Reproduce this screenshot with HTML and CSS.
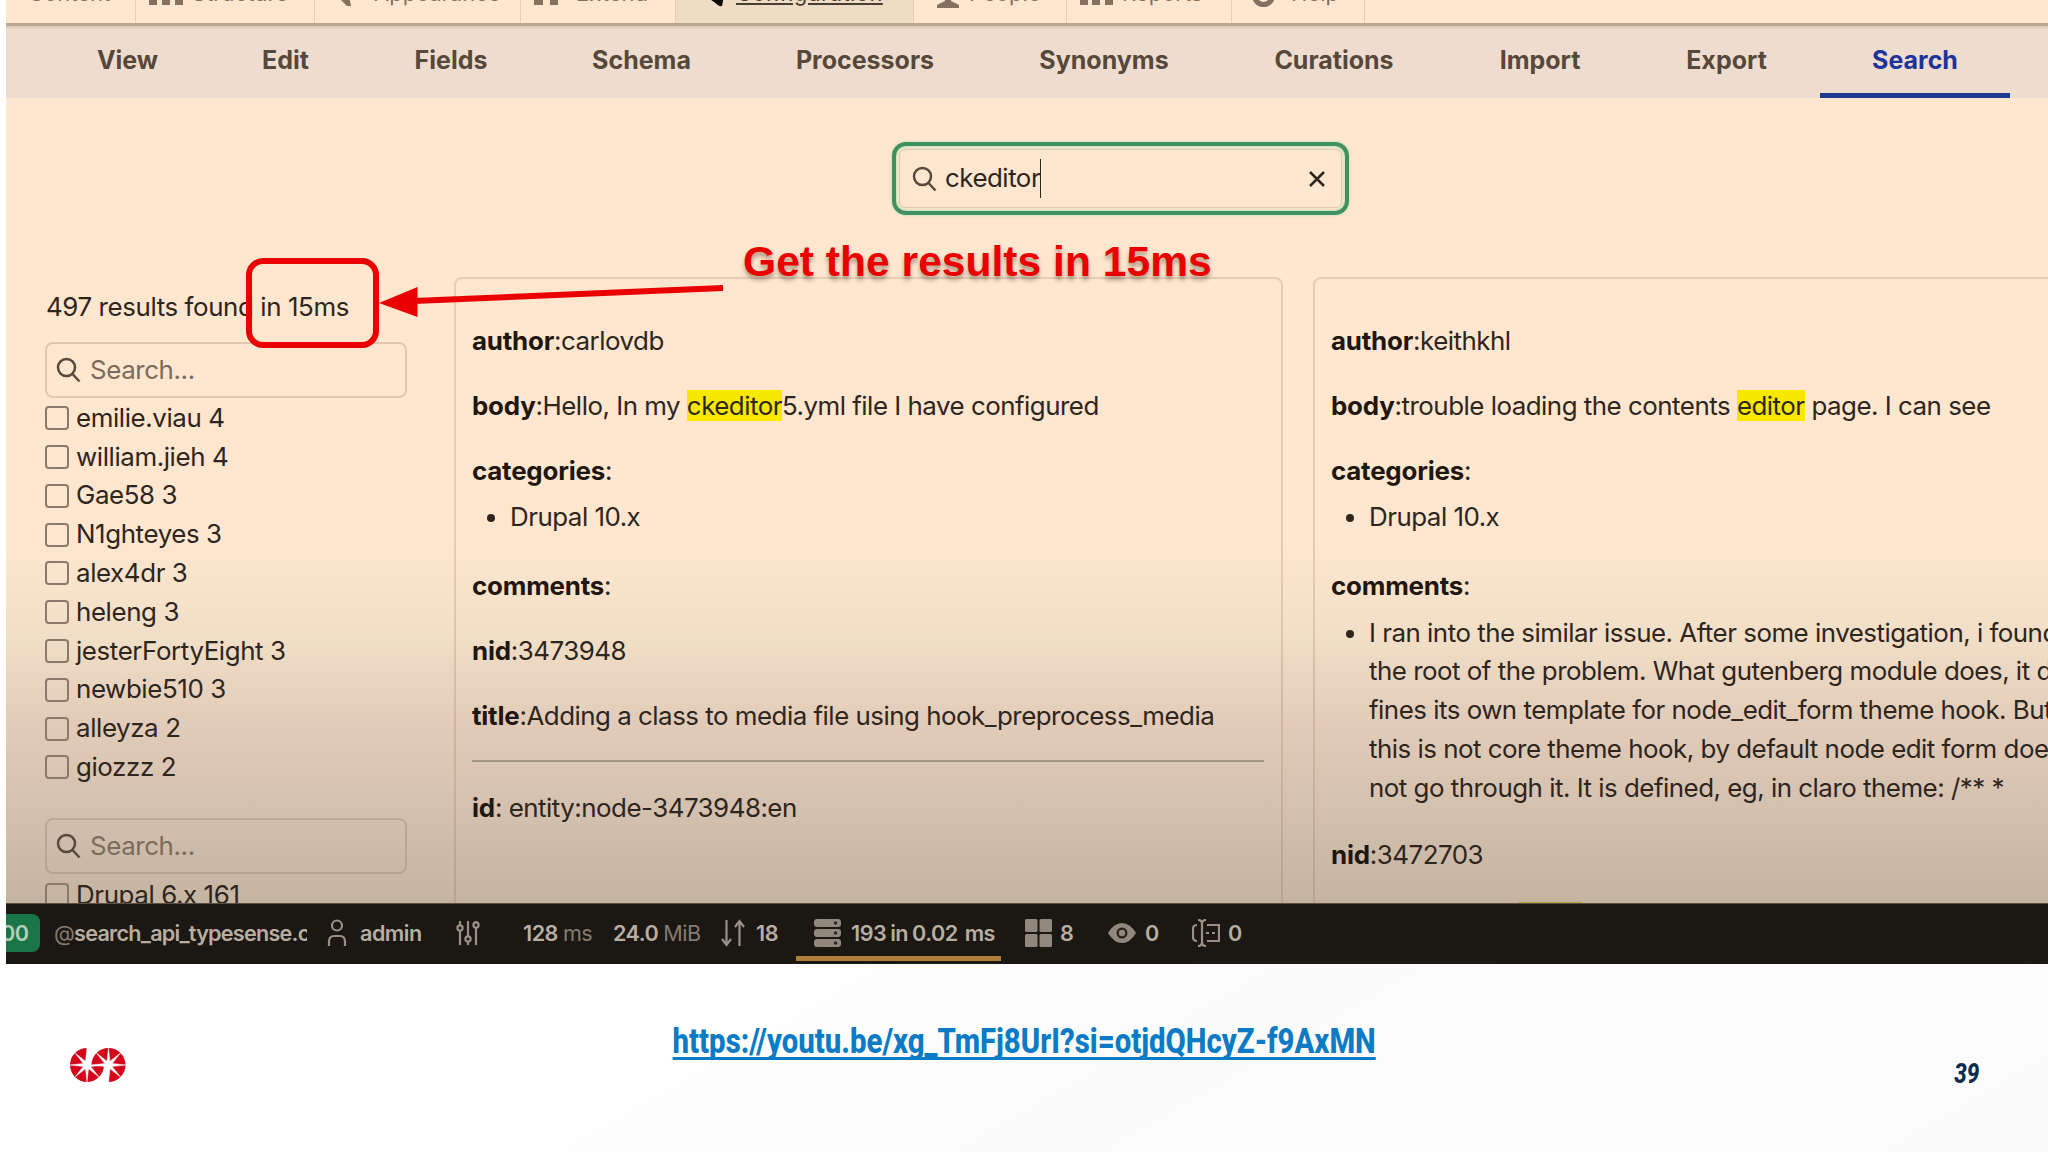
FILE: index.html
```html
<!DOCTYPE html>
<html lang="en">

<head>
    <meta charset="utf-8">
    <title>Search results in 15ms</title>
    <link rel="stylesheet" href="styles.css">
</head>

<body>
    <div class="slide">
        <div class="screen">
            <nav class="admin-bar">
                <a class="admin-item"><span>Content</span></a>
                <a class="admin-item">
                    <svg width="34" height="22" viewBox="0 0 34 22"><path d="M4 12v8M17 12v8M30 12v8M4 10h26M17 2v8" stroke="currentColor" stroke-width="3" /><path d="M0 13h8v8H0zM13 13h8v8h-8zM26 13h8v8h-8z" fill="currentColor" /></svg>
                    <span>Structure</span>
                </a>
                <a class="admin-item">
                    <svg width="34" height="22" viewBox="0 0 34 22"><path d="M4 8l6-6 10 10 2 10h-4z" fill="currentColor" /></svg>
                    <span>Appearance</span>
                </a>
                <a class="admin-item">
                    <svg width="24" height="20" viewBox="0 0 24 20"><path d="M0 2h24v18h-8v-6H9v6H0z" fill="currentColor" /></svg>
                    <span>Extend</span>
                </a>
                <a class="admin-item active">
                    <svg width="24" height="24" viewBox="0 0 24 24"><path d="M4 10L14 2l8 6-3 15c-5 1-5-4-15-8z" fill="currentColor" /></svg>
                    <span>Configuration</span>
                </a>
                <a class="admin-item">
                    <svg width="24" height="25" viewBox="0 0 24 25"><circle cx="12" cy="7" r="6" fill="currentColor" /><path d="M9 10h6v8l8 4v3H1v-3l8-4z" fill="currentColor" /></svg>
                    <span>People</span>
                </a>
                <a class="admin-item">
                    <svg width="33" height="22" viewBox="0 0 33 22"><path d="M0 12h8v9H0zM12 5h8v16h-8zM25 0h8v21h-8z" fill="currentColor" /></svg>
                    <span>Reports</span>
                </a>
                <a class="admin-item">
                    <svg width="23" height="23" viewBox="0 0 23 23"><circle cx="11.5" cy="11.500" r="9" fill="none" stroke="currentColor" stroke-width="5" /></svg>
                    <span>Help</span>
                </a>
            </nav>

            <nav class="tabs">
                <a class="tab">View</a>
                <a class="tab">Edit</a>
                <a class="tab">Fields</a>
                <a class="tab">Schema</a>
                <a class="tab">Processors</a>
                <a class="tab">Synonyms</a>
                <a class="tab">Curations</a>
                <a class="tab">Import</a>
                <a class="tab">Export</a>
                <a class="tab active">Search</a>
            </nav>

            <main class="content">
                <div class="main-search">
                    <div class="main-search-inner">
                        <svg width="25" height="26" viewBox="0 0 25 26"><circle cx="10.500" cy="10.500" r="8.500" /><path d="M16.500 17l7 7.500" /></svg>
                        <span class="query">ckeditor</span>
                        <svg class="clear" width="18" height="18" viewBox="0 0 18 18"><path d="M2 2l14 14M16 2L2 16" /></svg>
                    </div>
                </div>

                <div class="columns">
                    <aside class="sidebar">
                        <div class="stats">497 results found in 15ms</div>
                        <div class="facet-search">
                            <svg width="25" height="26" viewBox="0 0 25 26"><circle cx="10.500" cy="10.500" r="8.500" /><path d="M16.500 17l7 7.500" /></svg>
                            <span>Search...</span>
                        </div>
                        <ul class="facets">
                            <li><i class="box"></i>emilie.viau 4</li>
                            <li><i class="box"></i>william.jieh 4</li>
                            <li><i class="box"></i>Gae58 3</li>
                            <li><i class="box"></i>N1ghteyes 3</li>
                            <li><i class="box"></i>alex4dr 3</li>
                            <li><i class="box"></i>heleng 3</li>
                            <li><i class="box"></i>jesterFortyEight 3</li>
                            <li><i class="box"></i>newbie510 3</li>
                            <li><i class="box"></i>alleyza 2</li>
                            <li><i class="box"></i>giozzz 2</li>
                        </ul>
                        <div class="facet-search">
                            <svg width="25" height="26" viewBox="0 0 25 26"><circle cx="10.500" cy="10.500" r="8.500" /><path d="M16.500 17l7 7.500" /></svg>
                            <span>Search...</span>
                        </div>
                        <ul class="facets">
                            <li><i class="box"></i>Drupal 6.x 161</li>
                        </ul>
                    </aside>

                    <article class="card">
                        <p><b>author</b>:carlovdb</p>
                        <p><b>body</b>:Hello, In my <mark>ckeditor</mark>5.yml file I have configured</p>
                        <p class="list-title"><b>categories</b>:</p>
                        <ul>
                            <li>Drupal 10.x</li>
                        </ul>
                        <p><b>comments</b>:</p>
                        <p><b>nid</b>:3473948</p>
                        <p class="last"><b>title</b>:Adding a class to media file using hook_preprocess_media</p>
                        <hr>
                        <p><b>id</b>: entity:node-3473948:en</p>
                    </article>

                    <article class="card">
                        <p><b>author</b>:keithkhl</p>
                        <p><b>body</b>:trouble loading the contents <mark>editor</mark> page. I can see</p>
                        <p class="list-title"><b>categories</b>:</p>
                        <ul>
                            <li>Drupal 10.x</li>
                        </ul>
                        <p class="list-title"><b>comments</b>:</p>
                        <ul>
                            <li>I ran into the similar issue. After some investigation, i found<br>
                                the root of the problem. What gutenberg module does, it de<br>
                                fines its own template for node_edit_form theme hook. But<br>
                                this is not core theme hook, by default node edit form does<br>
                                not go through it. It is defined, eg, in claro theme: /** *</li>
                        </ul>
                        <p class="last"><b>nid</b>:3472703</p>
                        <div class="next-mark"></div>
                    </article>
                </div>
            </main>

            <footer class="toolbar">
                <div class="status">00</div>
                <div class="tool route"><span class="dim">@</span>search_api_typesense.c</div>
                <div class="tool">
                    <svg width="20" height="28" viewBox="0 0 20 28"><circle cx="10" cy="6.500" r="5" /><path d="M2 27v-4q0-6 5-6h6q5 0 5 6v4" /></svg>
                </div>
                <div class="tool">admin</div>
                <div class="tool">
                    <svg width="24" height="26" viewBox="0 0 24 26"><path d="M4 1v4M4 11v14M12 1v15M12 22v3M20 1v1M20 8v17" /><circle cx="4" cy="8" r="2.600" /><circle cx="12" cy="19" r="2.600" /><circle cx="20" cy="5" r="2.600" /></svg>
                </div>
                <div class="tool">128<span class="dim unit">ms</span></div>
                <div class="tool">24.0<span class="dim unit">MiB</span></div>
                <div class="tool">
                    <svg width="25" height="28" viewBox="0 0 25 28"><path d="M5.500 1v24M1 20l4.500 6L10 20M18.500 27V3M14 8l4.500-6L23 8" /></svg>
                </div>
                <div class="tool">18</div>
                <div class="tool queries">
                    <svg class="solid" width="27" height="28" viewBox="0 0 27 28"><rect width="27" height="8" rx="3" /><rect y="10" width="27" height="8" rx="3" /><rect y="20" width="27" height="8" rx="3" /><g class="hole"><circle cx="21.500" cy="4" r="1.700" /><circle cx="21.500" cy="14" r="1.700" /><circle cx="21.500" cy="24" r="1.700" /></g></svg>
                    <span>193<span class="in">in</span>0.02 <span class="ms">ms</span></span>
                </div>
                <div class="tool">
                    <svg class="solid" width="27" height="28" viewBox="0 0 27 28"><rect width="12.500" height="13" rx="1.500" /><rect x="14.500" width="12.500" height="13" rx="1.500" /><rect y="15" width="12.500" height="13" rx="1.500" /><rect x="14.500" y="15" width="12.500" height="13" rx="1.500" /></svg>
                </div>
                <div class="tool">8</div>
                <div class="tool">
                    <svg class="solid" width="28" height="20" viewBox="0 0 28 20"><path d="M0 10Q6 0 14 0t14 10q-6 10-14 10T0 10z" /><circle class="hole" cx="14" cy="10" r="5.500" /><circle cx="14" cy="10" r="3.200" /></svg>
                </div>
                <div class="tool">0</div>
                <div class="tool">
                    <svg width="28" height="28" viewBox="0 0 28 28"><path d="M5 6Q1 6 1 10v8q0 4 4 4M6 1q4 0 4 4v18q0 4-4 4M14 1q-4 0-4 4M14 27q-4 0-4-4M15 6h12v16H15M14 14h3M20 14h3" /></svg>
                </div>
                <div class="tool">0</div>
            </footer>

            <!-- annotation over the recording -->
            <div class="highlight-box"></div>
            <svg class="arrow" width="350" height="40" viewBox="0 0 350 40">
                <path d="M35 19L344 6" stroke="#ea0000" stroke-width="6" />
                <path d="M0 21L38.500 5v30z" fill="#ea0000" />
            </svg>
            <div class="callout">Get the results in 15ms</div>
        </div>

        <div class="slide-footer">
            <svg class="logo" width="56" height="34" viewBox="0 0 56 34">
                <g id="half">
                    <path d="M17 0A17 17 0 1 0 34 17H17z" fill="#d3061c" />
                    <path d="M17 0l1.500 13.300 2.200 2.200L34 17l-13.300 1.500L29 29l-10.500-8.300L17 34l-1.500-13.300L5 29l8.300-10.500L0 17l13.300-1.500L5 5l10.500 8.300z" fill="#fff" stroke="#fff" stroke-width="0.500" />
                </g>
                <use href="#half" transform="rotate(180 27.750 17)" />
            </svg>
            <a class="video-link"><span>https://youtu.be/xg_TmFj8UrI?si=otjdQHcyZ-f9AxMN</span></a>
            <div class="page-number">39</div>
        </div>
    </div>
</body>

</html>
```
FILE: styles.css
```css
* {
    box-sizing: border-box;
    margin: 0;
    padding: 0;
}

body {
    font-family: Inter, "Liberation Sans", sans-serif;
    background: #fff;
    overflow: hidden;
}

.slide {
    width: 2048px;
    height: 1152px;
    overflow: hidden;
    display: flex;
    flex-direction: column;
    background: linear-gradient(150deg, #fff 0%, #fff 60%, #fafafa 75%, #fdfdfd 82%, #fafafa 100%);
}

.screen {
    position: relative;
    height: 964px;
    margin-left: 6px;
    overflow: hidden;
    display: flex;
    flex-direction: column;
    background: linear-gradient(#fee6cf 0, #fee6cf 540px, #f1dec6 640px, #e2ccb9 720px, #d2bfad 820px, #c4b4a1 903px);
    color: #2e251d;
}

/* admin toolbar, scrolled half out of view */
.admin-bar {
    flex: none;
    height: 23px;
    overflow: hidden;
    display: grid;
    grid-template-columns: 130px 179px 206px 155px 238px 153px 165px 133px;
}

.admin-item {
    height: 60px;
    margin-top: -37px;
    display: flex;
    align-items: center;
    gap: 9px;
    padding-left: 13px;
    border-right: 1px solid #e3cfb8;
    font-size: 22px;
    color: #837060;
}

.admin-item svg {
    position: relative;
    top: 2px;
}

.admin-item:first-child {
    padding-left: 22px;
}

.admin-item.active {
    background: #eedcc4;
    padding-left: 27px;
    color: #0d0906;
}

.admin-item.active span {
    letter-spacing: 0.4px;
    text-decoration: underline;
    color: #4a3d31;
}

.admin-item:nth-child(3) {
    gap: 11px;
    padding-left: 14px;
}

.admin-item:nth-child(4) {
    gap: 18px;
}

.admin-item:nth-child(6) {
    padding-left: 22px;
}

.admin-item:nth-child(8) {
    gap: 16px;
    padding-left: 20px;
}

.tabs {
    flex: none;
    height: 75px;
    padding-left: 40px;
    border-top: 3px solid #bba891;
    background: linear-gradient(#d9c8b6 0, #eeddce 4px);
    display: grid;
    grid-template-columns: 163px 153px 178px 203px 244px 234px 226px 186px 187px 190px;
}

.tab {
    display: flex;
    align-items: center;
    justify-content: center;
    font-size: 25px;
    font-weight: 700;
    color: #57483c;
    border-bottom: 5px solid transparent;
}

.tab.active {
    color: #1c339b;
    border-bottom-color: #1c3c8f;
}

.content {
    flex: 1;
    min-height: 0;
    overflow: hidden;
    padding: 44px 0 0 39px;
    font-size: 25.9px;
    line-height: 38.8px;
    letter-spacing: -0.5px;
}

.main-search {
    width: 457px;
    height: 73px;
    margin-left: 847px;
    padding: 3px;
    border: 4px solid #3f9260;
    border-radius: 14px;
    box-shadow: 0 0 3px #a4dfae, inset 0 0 4px #a4dfae;
}

.main-search-inner {
    height: 100%;
    display: flex;
    align-items: center;
    padding: 0 15px 0 12px;
    border: 1px solid #dcc9b0;
    border-radius: 6px;
}

.main-search svg,
.facet-search svg {
    fill: none;
    stroke: #57493c;
    stroke-width: 2.5;
}

.query {
    margin-left: 8px;
    border-right: 1px solid #2e251d;
}

.main-search .clear {
    margin-left: auto;
    stroke: #2e251d;
}

.columns {
    display: grid;
    grid-template-columns: 361px 829px 829px;
    margin-top: 62px;
}

.sidebar {
    letter-spacing: -0.4px;
    margin-right: -1px;
}

.stats {
    padding-left: 1px;
    margin-top: 11px;
    margin-bottom: 15px;
}

.facet-search {
    height: 56px;
    display: flex;
    align-items: center;
    padding-left: 9px;
    border: 2px solid rgba(120, 90, 60, 0.22);
    border-radius: 8px;
    color: #7b6b5d;
}

.facet-search span {
    padding-top: 2px;
    margin-left: 9px;
}

.facets {
    list-style: none;
    margin-top: 1px;
    margin-bottom: 31px;
}

.facets li {
    height: 38.8px;
    display: flex;
    align-items: center;
    white-space: nowrap;
}

.box {
    width: 24px;
    height: 24px;
    margin-right: 7px;
    border: 2px solid #8b7a6b;
    border-radius: 4px;
}

.facets + .facet-search + .facets {
    margin-top: 2px;
}

.card {
    height: 640px;
    margin-left: 48px;
    margin-right: -48px;
    padding: 43px 17px 0 16px;
    border: 2px solid rgba(120, 90, 60, 0.18);
    border-radius: 8px;
    white-space: nowrap;
}

.card + .card {
    margin-left: 78px;
    margin-right: -78px;
}

.card p {
    margin-bottom: 26px;
}

.card .list-title {
    margin-bottom: 7.6px;
}

.card .last {
    margin-bottom: 0;
}

.card ul {
    padding-left: 38px;
    margin-bottom: 30.5px;
}

.card .list-title + ul + .last {
    margin-top: -2px;
}

.card hr {
    border: none;
    border-top: 2px solid #a39383;
    margin: 24px 0 27px;
}

.card b {
    font-weight: 700;
    letter-spacing: -0.2px;
    color: #1f1710;
}

mark {
    background: #f8e800;
    color: inherit;
}

.next-mark {
    width: 64px;
    height: 12px;
    margin: 27px 0 0 187px;
    background: #b5a33a;
}

/* profiler bar */
.toolbar {
    flex: none;
    height: 61px;
    border-top: 1px solid #5a5045;
    background: #1b1813;
    display: grid;
    grid-template-columns: 48px 273px 33px 96px 67px 90px 108px 35px 58px 211px 35px 48px 37px 47px 36px 60px;
    font-size: 21.6px;
    font-weight: 600;
    letter-spacing: -0.5px;
    color: #b8ada1;
}

.status {
    width: 34px;
    height: 38px;
    margin-top: 10px;
    border-radius: 0 8px 8px 0;
    background: #1a7649;
    color: #b5ceb6;
    line-height: 38px;
    text-indent: -5px;
}

.tool {
    display: flex;
    align-items: center;
    padding-bottom: 2px;
    white-space: nowrap;
}

.tool svg {
    flex: none;
    fill: none;
    stroke: #9b9085;
    stroke-width: 2.2;
}

.tool svg.solid {
    fill: #92877c;
    stroke: none;
}

.tool .hole {
    fill: #29241e;
}

.dim {
    font-weight: 400;
    color: #857b70;
}

.unit {
    margin-left: 5px;
}

.route {
    width: 253px;
    overflow: hidden;
    letter-spacing: -0.75px;
}

.queries {
    width: 205px;
    margin-left: -18px;
    padding-left: 18px;
    position: relative;
    gap: 10px;
}

.queries::after {
    content: "";
    position: absolute;
    left: 0;
    right: 0;
    bottom: 3px;
    height: 5px;
    background: #ad7f38;
}

.in {
    margin: 0 4px;
}

.ms {
    margin-left: 2px;
}

.highlight-box {
    position: absolute;
    left: 240px;
    top: 258px;
    width: 133px;
    height: 90px;
    border: 6px solid #ea0000;
    border-radius: 17px;
}

.arrow {
    position: absolute;
    left: 373px;
    top: 282px;
}

.callout {
    position: absolute;
    left: 737px;
    top: 237px;
    font-family: "Liberation Sans", Arial, sans-serif;
    font-size: 42.6px;
    font-weight: 700;
    line-height: 49px;
    white-space: nowrap;
    color: #ea0000;
    text-shadow: 0 4px 4px rgba(60, 40, 20, 0.4);
}

.slide-footer {
    flex: 1;
    display: grid;
    grid-template-columns: 300px 1fr 300px;
    align-items: start;
}

.logo {
    margin: 84px 0 0 70px;
}

.video-link {
    margin-top: 54px;
    text-align: center;
    font-family: Roboto, sans-serif;
    font-size: 35.6px;
    font-weight: 800;
    line-height: 46px;
    color: #0b7bc6;
    white-space: nowrap;
}

.video-link span {
    display: inline-block;
    text-decoration: underline;
    text-decoration-thickness: 3px;
    text-decoration-skip-ink: none;
    text-underline-offset: 4px;
    transform: scaleX(0.825);
}

.page-number {
    justify-self: end;
    margin: 93px 69px 0 0;
    font-family: Roboto, sans-serif;
    font-size: 28px;
    font-style: italic;
    font-weight: 800;
    line-height: 34px;
    color: #0d2b4e;
    transform: scaleX(0.8);
    transform-origin: right;
}
```
